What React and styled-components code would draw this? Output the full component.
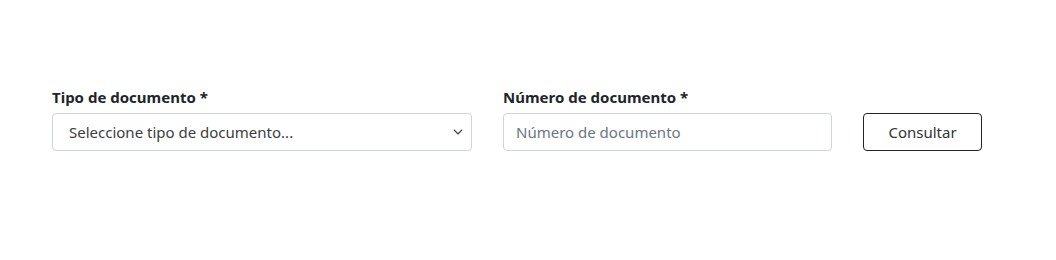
import React from 'react';
import styled, { createGlobalStyle } from 'styled-components';

const GlobalStyle = createGlobalStyle`
  body {
    margin: 0;
    background: #fff;
    font-family: "Segoe UI", "Noto Sans", "Open Sans", sans-serif;
    color: #212529;
  }
`;

const Form = styled.form`
  display: grid;
  grid-template-columns: 420px 329px 119px;
  column-gap: 31px;
  align-items: end;
  padding: 86px 0 0 52px;
`;

const Field = styled.div`
  display: flex;
  flex-direction: column;
`;

const Label = styled.label`
  font-size: 15px;
  font-weight: 700;
  line-height: 22px;
  margin-bottom: 5px;
  color: #212529;
`;

const SelectWrap = styled.div`
  position: relative;
`;

const Select = styled.select`
  appearance: none;
  width: 100%;
  height: 38px;
  box-sizing: border-box;
  border: 1px solid #ced4da;
  border-radius: 4px;
  background: #fff;
  padding: 0 36px 0 16px;
  font-family: inherit;
  font-size: 15px;
  color: #3d3d3d;
  outline: none;
`;

const Chevron = styled.svg`
  position: absolute;
  right: 8px;
  top: 14px;
  pointer-events: none;
`;

const Input = styled.input`
  width: 100%;
  height: 38px;
  box-sizing: border-box;
  border: 1px solid #ced4da;
  border-radius: 4px;
  padding: 0 12px;
  font-family: inherit;
  font-size: 15px;
  color: #212529;
  outline: none;
  &::placeholder {
    color: #6c757d;
  }
`;

const Button = styled.button`
  height: 38px;
  box-sizing: border-box;
  border: 1px solid #212529;
  border-radius: 4px;
  background: #fff;
  font-family: inherit;
  font-size: 15px;
  color: #333;
  cursor: pointer;
`;

export default function App() {
  return (
    <>
      <GlobalStyle />
      <Form onSubmit={(e) => e.preventDefault()}>
        <Field>
          <Label>Tipo de documento *</Label>
          <SelectWrap>
            <Select defaultValue="">
              <option value="" disabled>Seleccione tipo de documento...</option>
              <option value="cc">Cédula de ciudadanía</option>
            </Select>
            <Chevron width="12" height="10" viewBox="0 0 16 16">
              <path d="M2 5l6 6 6-6" fill="none" stroke="#343a40" strokeWidth="2.2" strokeLinecap="round" strokeLinejoin="round" />
            </Chevron>
          </SelectWrap>
        </Field>
        <Field>
          <Label>Número de documento *</Label>
          <Input placeholder="Número de documento" />
        </Field>
        <Button type="submit">Consultar</Button>
      </Form>
    </>
  );
}
